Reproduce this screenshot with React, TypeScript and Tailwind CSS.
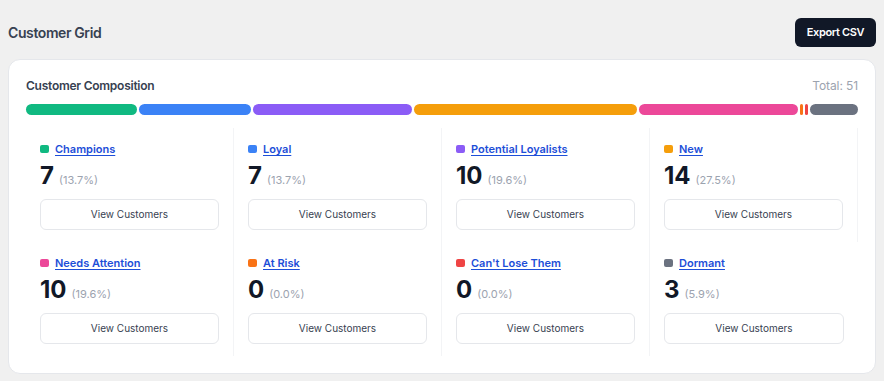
import React from "react";

type Seg = { name: string; count: number; pct: string; color: string };

const segs: Seg[] = [
  { name: "Champions", count: 7, pct: "13.7%", color: "bg-[#10b981]" },
  { name: "Loyal", count: 7, pct: "13.7%", color: "bg-[#3b82f6]" },
  { name: "Potential Loyalists", count: 10, pct: "19.6%", color: "bg-[#8b5cf6]" },
  { name: "New", count: 14, pct: "27.5%", color: "bg-[#f59e0b]" },
  { name: "Needs Attention", count: 10, pct: "19.6%", color: "bg-[#ec4899]" },
  { name: "At Risk", count: 0, pct: "0.0%", color: "bg-[#f97316]" },
  { name: "Can't Lose Them", count: 0, pct: "0.0%", color: "bg-[#ef4444]" },
  { name: "Dormant", count: 3, pct: "5.9%", color: "bg-[#6b7280]" },
];

export default function App() {
  return (
    <div
      className="min-h-[381px] w-full bg-[#f0f0f0] px-2 pt-[18px] pb-2"
      style={{ fontFamily: "Inter, 'Noto Sans', sans-serif" }}
    >
      <div className="flex items-center justify-between">
        <h1 className="text-[14px] font-semibold leading-5 tracking-[-0.4px] text-[#374151]">Customer Grid</h1>
        <button className="h-[29px] w-[81px] rounded-md bg-[#111827] text-[11px] font-semibold tracking-[-0.35px] text-white">
          Export CSV
        </button>
      </div>
      <div className="mt-3 rounded-xl border border-[#e5e7eb] bg-white px-[17px] pt-[18px] pb-[17px]">
        <div className="flex items-center justify-between">
          <div className="text-[12px] font-semibold leading-4 tracking-[-0.25px] text-[#374151]">Customer Composition</div>
          <div className="text-[12px] leading-4 tracking-[-0.1px] text-[#9ca3af]">Total: 51</div>
        </div>
        <div className="mt-[10px] flex h-[11px] gap-[2px]">
          {segs.map((s) => (
            <div
              key={s.name}
              className={`h-full rounded-full ${s.color}`}
              style={s.count === 0 ? { width: 3, flex: "none" } : { flexGrow: s.count, flexBasis: 0 }}
            />
          ))}
        </div>
        <div className="mt-[13px] grid grid-cols-4">
          {segs.map((s, i) => (
            <div
              key={s.name}
              className={`px-[14px] pt-[14px] pb-3 ${i === segs.length - 1 ? "" : "border-r border-[#f3f4f6]"}`}
            >
              <div className="flex h-[14px] items-center gap-[6px]">
                <span className={`h-[8px] w-[9px] rounded-[2px] ${s.color}`} />
                <a className="text-[11px] font-semibold leading-[14px] text-[#1d4ed8] underline underline-offset-2">
                  {s.name}
                </a>
              </div>
              <div className="mt-1 h-8 whitespace-nowrap leading-8">
                <span className="text-[24px] font-bold text-[#111827]">{s.count}</span>
                <span className="ml-[5px] text-[11px] text-[#9ca3af]">({s.pct})</span>
              </div>
              <button className="mt-[7px] h-[31px] w-full rounded-md border border-[#e5e7eb] bg-white text-[10px] text-[#374151]">
                View Customers
              </button>
            </div>
          ))}
        </div>
      </div>
    </div>
  );
}
